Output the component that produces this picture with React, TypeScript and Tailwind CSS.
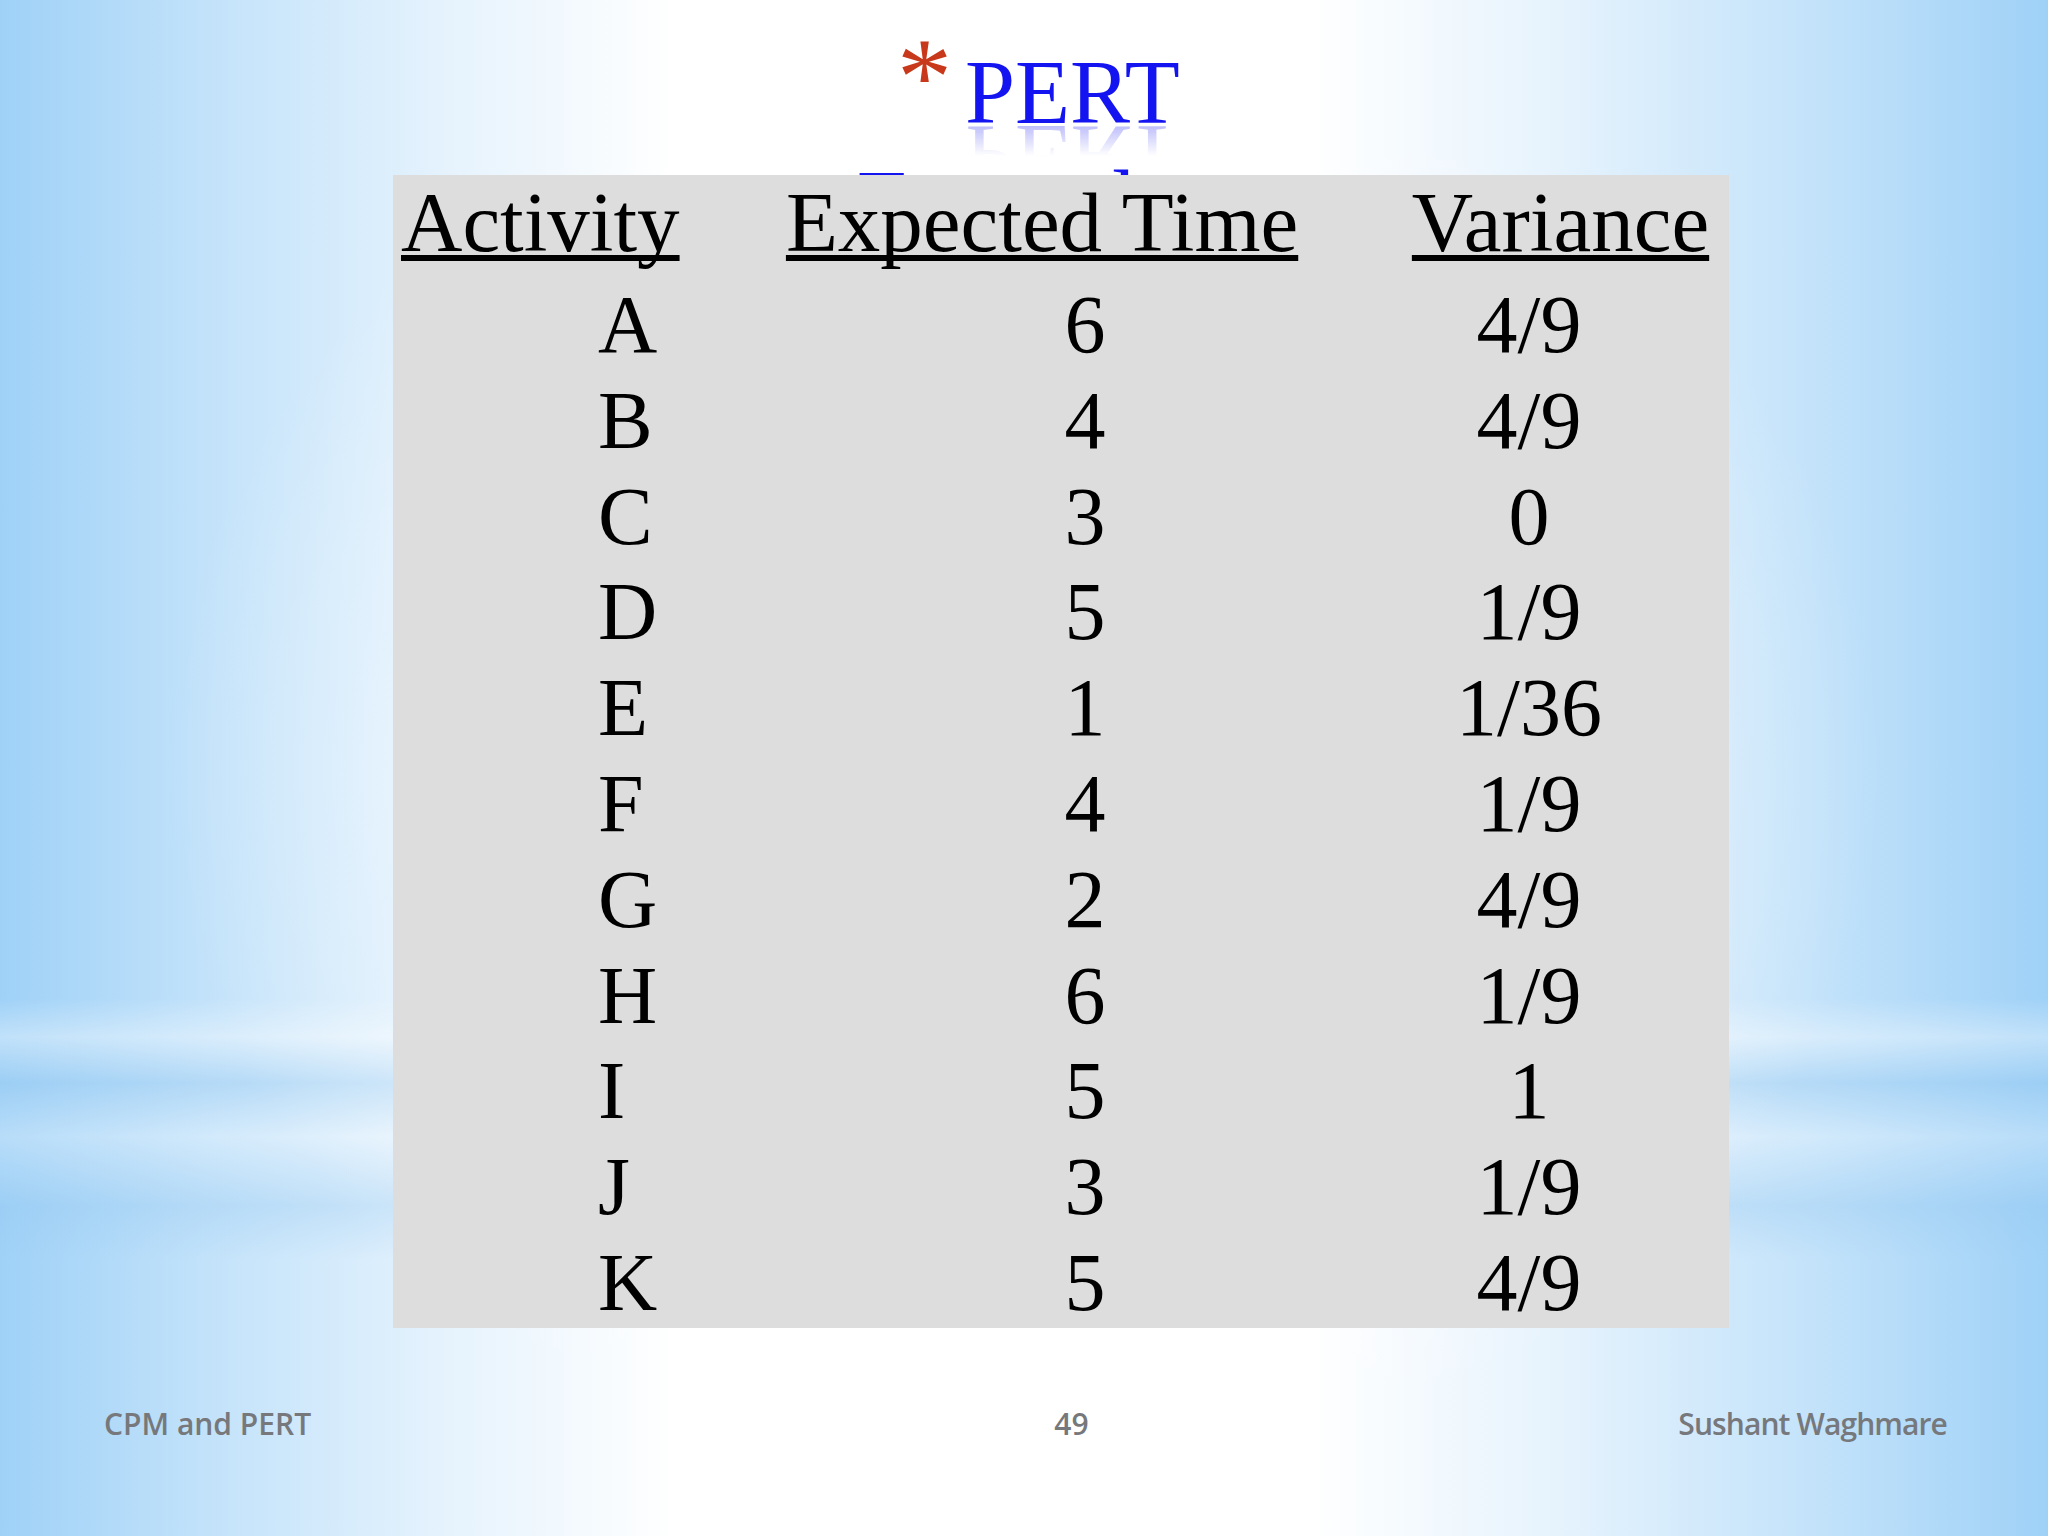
const rows: [string, string, string][] = [
  ["A", "6", "4/9"],
  ["B", "4", "4/9"],
  ["C", "3", "0"],
  ["D", "5", "1/9"],
  ["E", "1", "1/36"],
  ["F", "4", "1/9"],
  ["G", "2", "4/9"],
  ["H", "6", "1/9"],
  ["I", "5", "1"],
  ["J", "3", "1/9"],
  ["K", "5", "4/9"],
];

const App = () => {
  return (
    <div className="w-full h-screen overflow-hidden flex flex-col bg-[image:radial-gradient(ellipse_42%_48%_at_50%_50%,rgba(255,255,255,0.9),rgba(255,255,255,0)_100%),linear-gradient(180deg,rgba(255,255,255,0)_0%,rgba(255,255,255,0)_65%,rgba(255,255,255,0.35)_67.5%,rgba(150,200,240,0.35)_70.5%,rgba(255,255,255,0.25)_74%,rgba(150,200,240,0.3)_78.5%,rgba(255,255,255,0)_82%),linear-gradient(90deg,#9fd1f7_0%,#c2e2fa_10%,#e6f3fd_22%,#ffffff_33%,#ffffff_64%,#e6f3fd_76%,#c2e2fa_89%,#9fd1f7_100%)]">
      {/* TITLE */}
      <div className="h-[175px] shrink-0 pt-[38px] pl-[857px] font-['Liberation_Serif',serif] text-[90px] leading-[110px] text-[#1414f0]">
        <div className="flex items-start pl-[40px]">
          <span className="w-[68px] text-[110px] leading-[78px] text-[#c8391b]">*</span>
          <span className="inline-block [-webkit-box-reflect:below_-47px_linear-gradient(to_bottom,transparent_50%,rgba(255,255,255,0.5))]">
            PERT
          </span>
        </div>
        <div>Example</div>
      </div>

      {/* TABLE */}
      <div className="relative z-10 shrink-0 ml-[393px] w-[1336px] h-[1153px] bg-[#dddddd] pt-[2px] font-['Liberation_Serif',serif] text-black">
        <div className="flex text-[85px] leading-[90px]">
          <div className="w-[300px] pl-[8px]">
            <span className="underline decoration-[length:6px] underline-offset-[4px] [text-decoration-skip-ink:none]">Activity</span>
          </div>
          <div className="w-[702px] text-center">
            <span className="underline decoration-[length:6px] underline-offset-[4px] [text-decoration-skip-ink:none]">Expected Time</span>
          </div>
          <div className="w-[338px] text-center">
            <span className="underline decoration-[length:6px] underline-offset-[4px] [text-decoration-skip-ink:none]">Variance</span>
          </div>
        </div>
        <div className="mt-[10px] flex flex-col text-[82px]">
          {rows.map(([act, time, variance]) => (
            <div key={act} className="flex h-[95.8px] leading-[95.8px]">
              <div className="w-[420px] pl-[205px]">{act}</div>
              <div className="w-[544px] text-center">{time}</div>
              <div className="w-[344px] text-center">{variance}</div>
            </div>
          ))}
        </div>
      </div>

      {/* FOOTER */}
      <div className="mt-[75px] grid grid-cols-3 pl-[104px] pr-[101px] font-['Open_Sans',sans-serif] font-semibold text-[30px] leading-[41px] text-[#76787c]">
        <div>CPM and PERT</div>
        <div className="text-center pl-[92px]">49</div>
        <div className="text-right tracking-[-0.9px]">Sushant Waghmare</div>
      </div>
    </div>
  );
};

export default App;
